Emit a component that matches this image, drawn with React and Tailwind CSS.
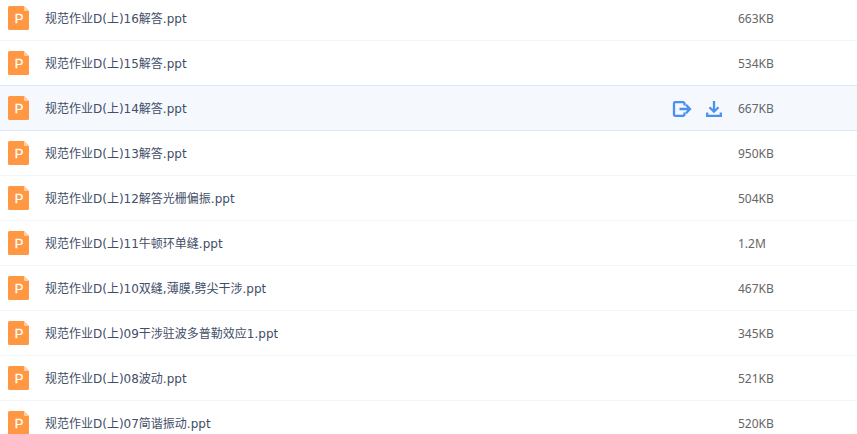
import { useState } from "react";
import clsx from "clsx";

const files = [
  { name: "规范作业D(上)16解答.ppt", size: "663KB" },
  { name: "规范作业D(上)15解答.ppt", size: "534KB" },
  { name: "规范作业D(上)14解答.ppt", size: "667KB" },
  { name: "规范作业D(上)13解答.ppt", size: "950KB" },
  { name: "规范作业D(上)12解答光栅偏振.ppt", size: "504KB" },
  { name: "规范作业D(上)11牛顿环单缝.ppt", size: "1.2M" },
  { name: "规范作业D(上)10双缝,薄膜,劈尖干涉.ppt", size: "467KB" },
  { name: "规范作业D(上)09干涉驻波多普勒效应1.ppt", size: "345KB" },
  { name: "规范作业D(上)08波动.ppt", size: "521KB" },
  { name: "规范作业D(上)07简谐振动.ppt", size: "520KB" },
];

const PptIcon = () => (
  <svg width="21" height="24" viewBox="0 0 21 24" className="block shrink-0" aria-hidden="true">
    <path d="M1.500 0H16L21 5V22.500a1.500 1.500 0 0 1-1.500 1.500H1.500a1.500 1.500 0 0 1-1.500-1.500V1.500a1.500 1.500 0 0 1 1.500-1.500Z" fill="#ff9743" />
    <path d="M16 0L21 5H17a1 1 0 0 1-1-1Z" fill="#ffd0a6" />
    <text
      x="11"
      y="17"
      textAnchor="middle"
      fontSize="13"
      fill="#fff"
      stroke="#fff"
      strokeWidth="0.3"
      fontFamily="Liberation Sans, sans-serif"
    >
      P
    </text>
  </svg>
);

const ShareIcon = () => (
  <svg width="20" height="18" viewBox="0 0 20 18" fill="none" stroke="#4a90f2" strokeWidth="2.300" className="block">
    <path d="M12.500 5.500V3.200L11.300 2.100H3.200A1.200 1.200 0 0 0 2 3.300V14.700A1.200 1.200 0 0 0 3.200 15.900H11.300L12.500 14.800V12.500" />
    <path d="M7.500 9H18M14 4.700L18 9L14 13.300" />
  </svg>
);

const DownloadIcon = () => (
  <svg width="16" height="18" viewBox="0 0 16 18" fill="none" stroke="#4a90f2" strokeWidth="2.300" className="block">
    <path d="M8 1V12M3.500 7.300L8 11.700L12.500 7.300" />
    <path d="M1.200 12.500V15.800H14.800V12.500" />
  </svg>
);

const App = () => {
  const [active, setActive] = useState(2);

  return (
    <div className="h-screen overflow-hidden bg-white text-xs">
      <table className="-mt-1 w-full table-fixed border-separate border-spacing-0">
        <tbody>
          {files.map((file, i) => {
            const isActive = i === active;
            // the line above the active row belongs to the row before it
            const cell = clsx(
              "h-[45px] border-b p-0",
              isActive || i + 1 === active ? "border-[#d9ebfa]" : "border-[#f1f5fa]",
              isActive && "bg-[#f5f9fe]"
            );
            return (
              <tr key={file.name} onClick={() => setActive(i)}>
                <td className={cell}>
                  <div className="flex items-center gap-4 pl-2">
                    <PptIcon />
                    <a
                      href="#"
                      className="truncate pt-0.5 font-['DejaVu_Sans','Noto_Sans_CJK_SC',sans-serif] text-[#424e67] hover:text-[#4a90f2]"
                    >
                      {file.name}
                    </a>
                  </div>
                </td>
                <td className={clsx(cell, "w-[66px]")}>
                  {isActive && (
                    <div className="flex items-center gap-[14px] pt-0.5">
                      <button type="button" aria-label="分享" className="cursor-pointer">
                        <ShareIcon />
                      </button>
                      <button type="button" aria-label="下载" className="cursor-pointer">
                        <DownloadIcon />
                      </button>
                    </div>
                  )}
                </td>
                <td className={clsx(cell, "w-[119px] font-['Noto_Sans',sans-serif] text-[#666]")}>
                  <div className="pt-0.5">{file.size}</div>
                </td>
              </tr>
            );
          })}
        </tbody>
      </table>
    </div>
  );
};

export default App;
